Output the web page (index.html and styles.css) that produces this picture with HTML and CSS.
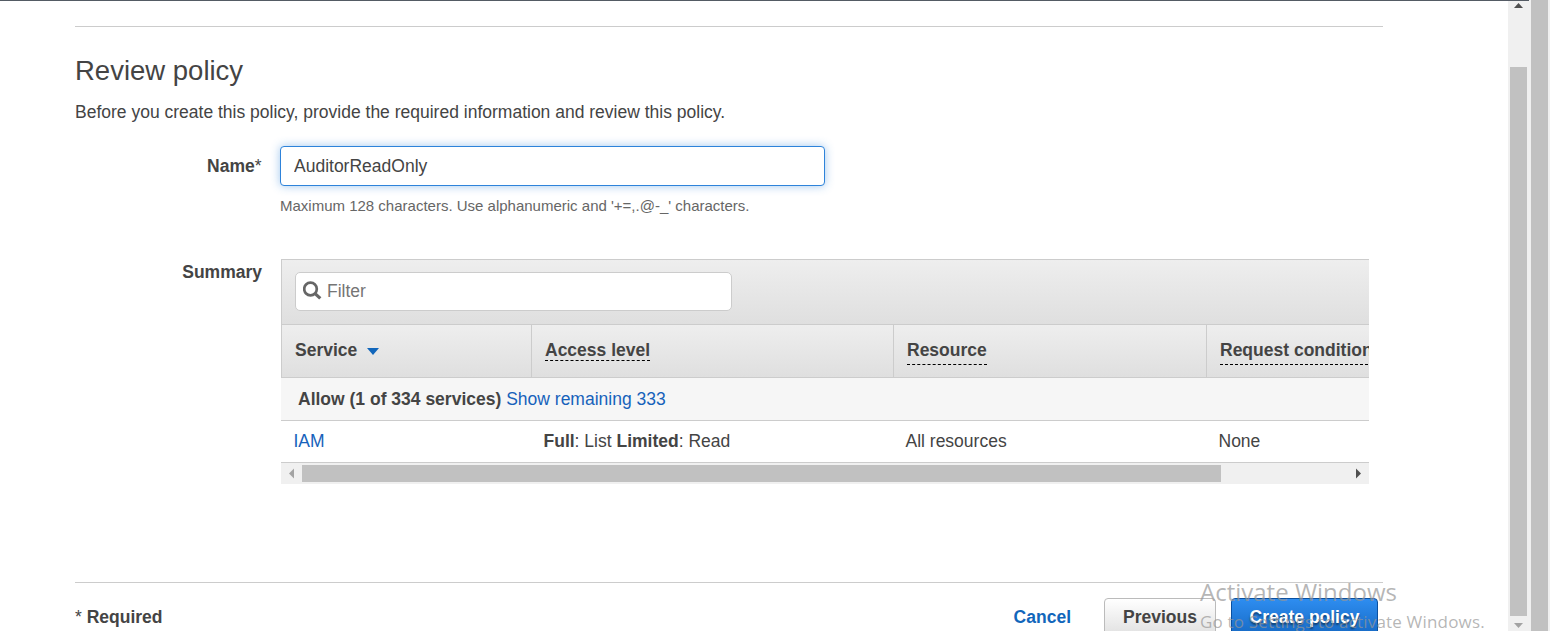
FILE: index.html
```
<!DOCTYPE html>
<html lang="en">
<head>
<meta charset="utf-8">
<title>Review policy</title>
<link rel="stylesheet" href="styles.css">
</head>
<body>
<div class="window">
  <main class="page">
    <hr class="rule">
    <h1 class="title">Review policy</h1>
    <p class="intro">Before you create this policy, provide the required information and review this policy.</p>
    <div class="field name-field">
      <label class="label name-label" for="name">Name<span class="star">*</span></label>
      <div class="control">
        <input class="name-input" id="name" type="text" value="AuditorReadOnly">
        <p class="hint">Maximum 128 characters. Use alphanumeric and '+=,.@-_' characters.</p>
      </div>
    </div>
    <div class="field summary-field">
      <div class="label summary-label">Summary</div>
      <section class="summary">
        <div class="toolbar">
          <div class="filter">
            <svg class="search" width="20" height="20" viewBox="0 0 20 20"><circle cx="7.500" cy="8" r="6.3" fill="none" stroke="#666" stroke-width="2.7"/><path d="M12.1 12.6 17.300 17.4" stroke="#666" stroke-width="3.2"/></svg>
            <span class="placeholder">Filter</span>
          </div>
        </div>
        <div class="cols head">
          <div class="cell">Service <svg class="caret" width="12" height="8" viewBox="0 0 12 8"><path d="M0 0h12L6 7z" fill="#1166bb"/></svg></div>
          <div class="cell"><span class="term near">Access level</span></div>
          <div class="cell"><span class="term">Resource</span></div>
          <div class="cell"><span class="term">Request condition</span></div>
        </div>
        <div class="group"><b>Allow (1 of 334 services)</b> <a class="link">Show remaining 333</a></div>
        <div class="cols row">
          <div class="cell"><a class="link">IAM</a></div>
          <div class="cell"><b>Full</b>: List <b>Limited</b>: Read</div>
          <div class="cell">All resources</div>
          <div class="cell">None</div>
        </div>
        <div class="hscroll">
          <svg class="arrow" width="21" height="21" viewBox="0 0 21 21"><path d="M13 5.500v10L8 10.500z" fill="#a3a3a3"/></svg>
          <div class="hthumb"></div>
          <svg class="arrow" width="21" height="21" viewBox="0 0 21 21"><path d="M8 5.500v10l5-5z" fill="#505050"/></svg>
        </div>
      </section>
    </div>
    <footer class="footer">
      <span class="required"><span class="star">*</span> Required</span>
      <a class="cancel">Cancel</a>
      <button class="btn previous">Previous</button>
      <button class="btn create">Create policy</button>
    </footer>
  </main>
  <div class="vscroll inner">
    <svg class="up" width="21" height="21" viewBox="0 0 21 21"><path d="M6 8h9L10.500 3z" fill="#505050"/></svg>
    <div class="vthumb"></div>
    <svg class="down" width="21" height="15" viewBox="0 0 21 15"><path d="M6 7h9L10.500 12z" fill="#a3a3a3"/></svg>
  </div>
  <div class="vscroll outer"><div class="vthumb"></div></div>
  <div class="watermark">
    <div class="wm-title">Activate Windows</div>
    <div class="wm-text">Go to Settings to activate Windows.</div>
  </div>
</div>
</body>
</html>
```
FILE: styles.css
```
* { box-sizing: border-box; }
body {
  margin: 0;
  overflow: hidden;
  background: #fff;
  color: #444;
  font: 17.5px/22px "Liberation Sans", Arial, sans-serif;
}
.window { position: relative; display: flex; width: 1550px; height: 631px; overflow: hidden; }
.page { width: 1508px; height: 631px; padding: 25px 125px 0 75px; border-top: 1px solid #545b64; }
.rule { margin: 0; border: 0; height: 1px; background: #ccc; }
.title { margin: 27px 0 0; font-size: 27.500px; line-height: 34px; font-weight: 400; }
.intro { margin: 13px 0 0; }
.field { display: flex; }
.name-field { margin-top: 23px; }
.label { width: 187px; margin-right: 18px; padding-top: 9px; text-align: right; font-weight: 700; }
.name-label { padding-right: 0.500px; }
.star { font-weight: 400; }
.name-input {
  display: block;
  width: 545px;
  height: 40px;
  padding: 0 13px;
  border: 1px solid #2e83da;
  border-radius: 4px;
  outline: 0;
  box-shadow: 0 0 10px rgba(46, 131, 218, .45);
  color: #444;
  font: inherit;
}
.hint { margin: 10px 0 0; font-size: 15px; line-height: 20px; color: #666; }
.summary-field { margin-top: 43px; }
.summary-label { padding-top: 2px; }
.summary { width: 1088px; margin-left: 1px; overflow: hidden; }
.toolbar {
  height: 65px;
  padding: 12px 13px;
  border: solid #ccc;
  border-width: 1px 0 0 1px;
  background: linear-gradient(#eee, #dfdfdf);
}
.filter {
  display: flex;
  align-items: center;
  width: 437px;
  height: 39px;
  padding: 0 0 2px 7px;
  border: 1px solid #ccc;
  border-radius: 5px;
  background: #fff;
  color: #757575;
}
.search { margin-right: 4px; }
.cols { display: grid; grid-template-columns: 250px 362px 313px 260px; }
.head {
  width: 1185px;
  height: 54px;
  border: solid #ccc;
  border-width: 1px 0 1px 1px;
  background: linear-gradient(#eee, #dfdfdf);
  font-weight: 700;
}
.head .cell { padding: 14px 13px 0; border-right: 1px solid #ccc; white-space: nowrap; }
.caret { margin-left: 5px; }
.term { display: inline-block; height: 26px; border-bottom: 1px dashed #000; }
.term.near { height: 22px; }
.group { height: 43px; padding: 10px 17px; border-bottom: 1px solid #ccc; background: #f6f6f6; }
.link { color: #1662bb; }
.row { width: 1185px; height: 42px; border-bottom: 1px solid #ccc; }
.row .cell { padding: 9px 13px 0 12.500px; }
.hscroll { display: flex; align-items: center; height: 21px; background: #f0f0f0; }
.hthumb { width: 919px; height: 17px; margin-right: 127px; background: #c1c1c1; }
.footer {
  display: flex;
  align-items: flex-start;
  margin-top: 98px;
  height: 49px;
  padding: 15px 5px 0 0;
  border-top: 1px solid #ccc;
  overflow: hidden;
}
.required { margin: 8px auto 0 0; font-weight: 700; }
.cancel { margin: 8px 33px 0 0; color: #1166bb; font-weight: 700; }
.btn {
  height: 40px;
  padding: 0 0 2px;
  border: 1px solid #bbb;
  border-radius: 4px;
  font: 700 17.500px/36px "Liberation Sans", Arial, sans-serif;
}
.previous { width: 112px; margin-right: 15px; color: #444; background: linear-gradient(#fff, #dfdfdf); }
.create {
  width: 147px;
  border-color: #0b50a0;
  color: #fff;
  background: linear-gradient(#2e8df0, #1568c2);
  text-shadow: 0 2px 2px rgba(0, 0, 0, .5);
}
.vscroll { height: 631px; background: #f0f0f0; }
.inner {
  display: flex;
  flex-direction: column;
  width: 22px;
  background: linear-gradient(#545b64, #545b64) 0 0 / 21px 1px no-repeat #f0f0f0;
}
.inner .vthumb { width: 17px; height: 549px; margin: 46px 0 0 2px; background: #c1c1c1; }
.outer { width: 20px; padding-left: 1px; }
.outer .vthumb { width: 17px; height: 631px; background: #c1c1c1; }
.up, .down { flex: none; display: block; }
.watermark {
  position: absolute;
  left: 1200px;
  top: 575px;
  color: rgba(150, 150, 150, .7);
  font-family: "Open Sans", "Noto Sans", sans-serif;
  white-space: nowrap;
}
.wm-title { font-size: 24px; line-height: 34px; }
.wm-text { font-size: 17px; line-height: 26px; letter-spacing: .18px; }
```
